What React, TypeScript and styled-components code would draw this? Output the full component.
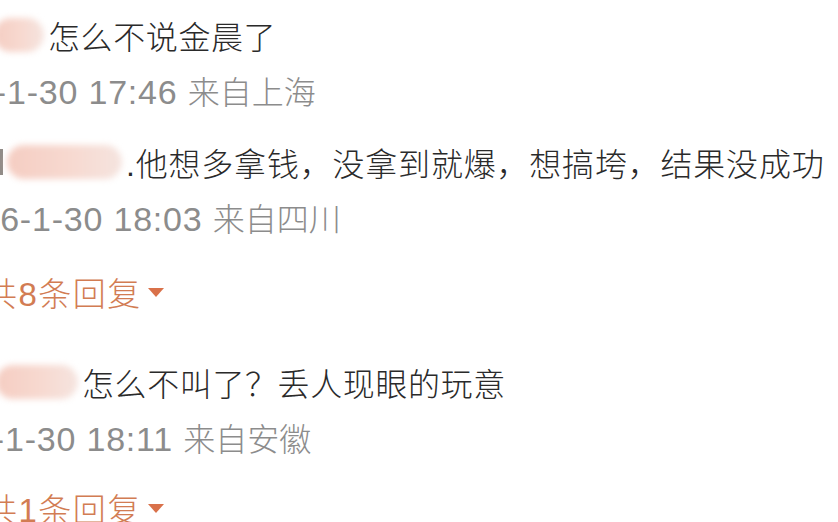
import React from "react";
import styled, { createGlobalStyle } from "styled-components";

const Global = createGlobalStyle`
  html, body { margin: 0; padding: 0; background: #ffffff; }
  body { overflow: hidden; }
  #root { width: 838px; height: 522px; overflow: hidden; }
`;

const Viewport = styled.div`
  width: 838px;
  height: 522px;
  overflow: hidden;
  background: #ffffff;
  font-family: "Liberation Sans", "Noto Sans CJK SC", sans-serif;
`;

const List = styled.div`
  display: flex;
  flex-direction: column;
  padding-top: 13px;
`;

const Comment = styled.div<{ $top: number }>`
  display: flex;
  flex-direction: column;
  margin-top: ${(p) => p.$top}px;
`;

const Body = styled.div<{ $shift: number }>`
  display: flex;
  align-items: center;
  height: 44px;
  margin-left: ${(p) => p.$shift}px;
  font-size: 32px;
  font-weight: 300;
  color: #2a2a2a;
  white-space: nowrap;
`;

const NameBlur = styled.span<{ $w: number }>`
  display: inline-block;
  width: ${(p) => p.$w}px;
  height: 34px;
  border-radius: 17px;
  background: linear-gradient(90deg, #f5cdc2 0%, #f7d9d0 55%, #f5e4df 100%);
  filter: blur(3px);
  margin-right: 4px;
  flex: none;
`;

const Text = styled.span<{ $ls?: number }>`
  letter-spacing: ${(p) => p.$ls ?? 0.6}px;
`;

const Meta = styled.div<{ $shift: number }>`
  height: 44px;
  line-height: 44px;
  margin-top: 13px;
  margin-left: ${(p) => p.$shift}px;
  font-size: 32px;
  font-weight: 300;
  color: #8c8c8c;
  white-space: nowrap;
`;

const Time = styled.span`
  font-size: 34px;
  letter-spacing: 0.8px;
`;

const Replies = styled.div<{ $top: number; $shift: number }>`
  display: flex;
  align-items: center;
  height: 44px;
  margin-top: ${(p) => p.$top}px;
  margin-left: ${(p) => p.$shift}px;
  font-size: 33px;
  font-weight: 300;
  letter-spacing: 1.5px;
  color: #d27c53;
  white-space: nowrap;
`;

const Caret = styled.span`
  display: inline-block;
  width: 0;
  height: 0;
  margin-left: 6px;
  border-left: 8.5px solid transparent;
  border-right: 8.5px solid transparent;
  border-top: 9px solid #d9714a;
`;

const Dark = styled.span`
  display: inline-block;
  width: 4px;
  height: 26px;
  background: #4a4038;
  opacity: 0.6;
  margin-right: 4px;
  flex: none;
`;

export default function App() {
  return (
    <Viewport>
      <Global />
      <List>
        <Comment $top={0}>
          <Body $shift={-6}>
            <NameBlur $w={50} />
            <Text>怎么不说金晨了</Text>
          </Body>
          <Meta $shift={-84}>
            <Time>2026-1-30 17:46 </Time>来自上海
          </Meta>
        </Comment>
        <Comment $top={26}>
          <Body $shift={-1}>
            <Dark />
            <NameBlur $w={115} />
            <Text $ls={0.8}>.他想多拿钱，没拿到就爆，想搞垮，结果没成功</Text>
          </Body>
          <Meta $shift={-59}>
            <Time>2026-1-30 18:03 </Time>来自四川
          </Meta>
          <Replies $top={29} $shift={-16}>
            共8条回复<Caret />
          </Replies>
        </Comment>
        <Comment $top={46}>
          <Body $shift={-4}>
            <NameBlur $w={82} />
            <Text>怎么不叫了？丢人现眼的玩意</Text>
          </Body>
          <Meta $shift={-86}>
            <Time>2026-1-30 18:11 </Time>来自安徽
          </Meta>
          <Replies $top={25} $shift={-16}>
            共1条回复<Caret />
          </Replies>
        </Comment>
      </List>
    </Viewport>
  );
}
